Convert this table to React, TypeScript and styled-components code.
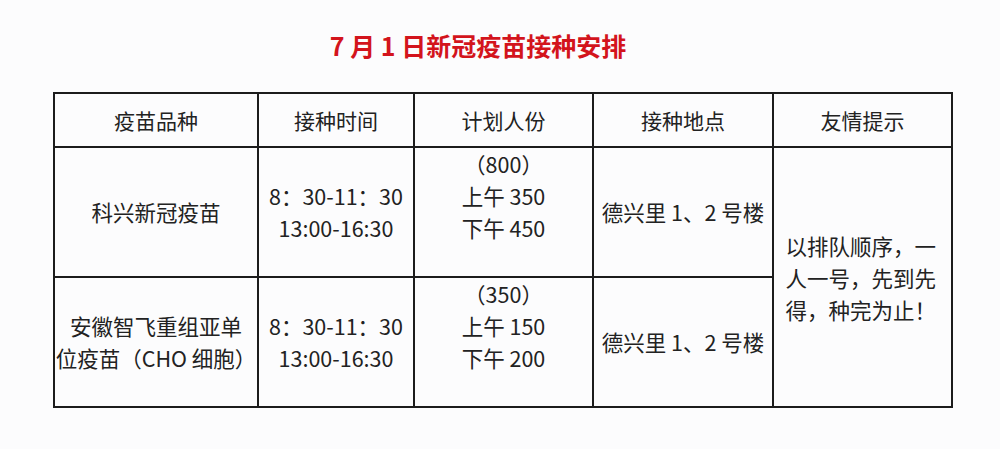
import React from 'react';
import styled, { createGlobalStyle } from 'styled-components';

const GlobalStyle = createGlobalStyle`
  html, body {
    margin: 0;
    padding: 0;
    background: #fcfcfd;
  }
  body {
    font-family: "Noto Sans CJK SC", "Noto Sans", sans-serif;
    color: #222;
  }
`;

const Page = styled.div`
  width: 1000px;
  height: 449px;
  box-sizing: border-box;
  padding: 25px 49px 0 53px;
  background: #fcfcfd;
`;

const Title = styled.h1`
  margin: 0 0 27px;
  padding-right: 48px;
  height: 40px;
  line-height: 40px;
  text-align: center;
  font-size: 25px;
  font-weight: 700;
  color: #d3141c;
`;

const Table = styled.table`
  width: 898px;
  border-collapse: collapse;
  table-layout: fixed;
`;

const Cell = styled.td`
  border: 2px solid #1c1c1c;
  padding: 0;
  text-align: center;
  vertical-align: middle;
  font-size: 21.5px;
  line-height: 32px;
  color: #222;
`;

const HeadCell = styled(Cell).attrs({ as: 'th' })`
  font-weight: 400;
  font-size: 21px;
  height: 52px;
`;

const BodyRow = styled.tr<{ $h: number }>`
  height: ${({ $h }) => $h}px;
`;

const Tip = styled.div`
  width: 154px;
  margin: 0 auto;
  text-align: left;
  line-height: 32px;
  padding-top: 2px;
`;

const columns = [204, 156, 179, 180, 179];
const headers = ['疫苗品种', '接种时间', '计划人份', '接种地点', '友情提示'];

const Lines = ({ items }: { items: string[] }) => (
  <>
    {items.map((t, i) => (
      <div key={i}>{t || '\u00a0'}</div>
    ))}
  </>
);

export default function App() {
  return (
    <Page>
      <GlobalStyle />
      <Title>7 月 1 日新冠疫苗接种安排</Title>
      <Table>
        <colgroup>
          {columns.map((w, i) => (
            <col key={i} style={{ width: w }} />
          ))}
        </colgroup>
        <thead>
          <tr>
            {headers.map((h) => (
              <HeadCell key={h}>{h}</HeadCell>
            ))}
          </tr>
        </thead>
        <tbody>
          <BodyRow $h={128}>
            <Cell>科兴新冠疫苗</Cell>
            <Cell>
              <Lines items={['8：30-11：30', '13:00-16:30']} />
            </Cell>
            <Cell>
              <Lines items={['（800）', '上午 350', '下午 450', '']} />
            </Cell>
            <Cell>德兴里 1、2 号楼</Cell>
            <Cell rowSpan={2}>
              <Tip>以排队顺序，一人一号，先到先得，种完为止！</Tip>
            </Cell>
          </BodyRow>
          <BodyRow $h={127}>
            <Cell>
              <Lines items={['安徽智飞重组亚单', '位疫苗（CHO 细胞）']} />
            </Cell>
            <Cell>
              <Lines items={['8：30-11：30', '13:00-16:30']} />
            </Cell>
            <Cell>
              <Lines items={['（350）', '上午 150', '下午 200', '']} />
            </Cell>
            <Cell>德兴里 1、2 号楼</Cell>
          </BodyRow>
        </tbody>
      </Table>
    </Page>
  );
}
